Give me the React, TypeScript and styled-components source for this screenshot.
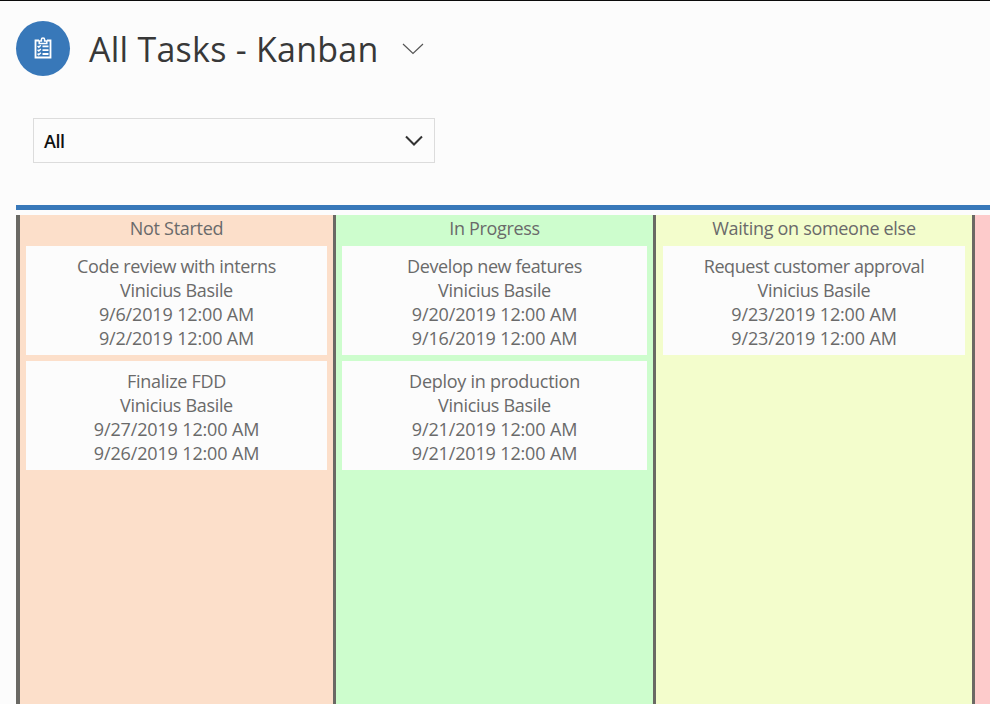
import React from 'react';
import styled, { createGlobalStyle } from 'styled-components';

const GlobalStyle = createGlobalStyle`
  * { box-sizing: border-box; }
  body { margin: 0; background: #fcfcfc; overflow: hidden; }
`;

const Page = styled.main`
  height: 704px;
  overflow: hidden;
  border-top: 1px solid #0b0b0b;
  background: #fcfcfc;
  color: #6a6a6a;
  font-family: 'Open Sans', 'Noto Sans', sans-serif;
`;

const Header = styled.header`
  display: flex;
  align-items: center;
  height: 94px;
  padding-left: 16px;
`;

const Badge = styled.div`
  display: grid;
  place-items: center;
  width: 54px;
  height: 55px;
  border-radius: 50%;
  background: #3878b9;
`;

const Title = styled.h1`
  margin: 1px 0 0 19px;
  width: 290px;
  color: #383838;
  font-size: 34px;
  font-weight: 400;
  line-height: 46px;
  letter-spacing: 0.25px;
  white-space: nowrap;
`;

const TitleChevron = styled.svg`
  margin: 1px 0 0 23px;
`;

const Select = styled.button`
  display: flex;
  align-items: center;
  justify-content: space-between;
  width: 402px;
  height: 45px;
  margin: 23px 0 0 33px;
  padding: 1px 11px 0 10px;
  border: 1px solid #dcdcdc;
  background: #fcfcfc;
  color: #111;
  font: 600 18px/24px 'Open Sans', sans-serif;
  letter-spacing: -0.5px;
`;

const SelectChevron = styled.svg`
  margin-top: -1px;
`;

const Board = styled.section`
  display: grid;
  grid-template-columns: 317px 320px 319px 320px;
  height: 510px;
  margin: 42px 0 0 16px;
  padding-top: 5px;
  border-top: 5px solid #3878b9;
`;

const Column = styled.section<{ $color: string; $edge: number; $inset: number }>`
  display: flex;
  flex-direction: column;
  gap: 6px;
  padding: 0 ${p => p.$inset}px 0 ${p => p.$inset}px;
  border-left: ${p => p.$edge}px solid #6a6964;
  background: ${p => p.$color};
`;

const ColumnTitle = styled.h2`
  margin: 0;
  height: 25.3px;
  font-size: 18px;
  font-weight: 400;
  line-height: 27px;
  text-align: center;
  white-space: nowrap;
`;

const Card = styled.article`
  height: 109.1px;
  padding-top: 7.3px;
  background: #fcfcfc;
  text-align: center;
`;

const Line = styled.div`
  font-size: 18px;
  line-height: 24px;
  white-space: nowrap;
`;

const Fit = styled.span<{ $track?: number }>`
  letter-spacing: ${p => p.$track ?? 0}px;
`;

type Text = [string, number];
interface ColumnData {
  title: Text;
  color: string;
  edge: number;
  inset: number;
  cards: Text[][];
}

const OWNER: Text = ['Vinicius Basile', -0.33];

const columns: ColumnData[] = [
  {
    title: ['Not Started', -0.3], color: '#fcdfca', edge: 4, inset: 6,
    cards: [
      [['Code review with interns', -0.36], OWNER, ['9/6/2019 12:00 AM', -0.15], ['9/2/2019 12:00 AM', -0.15]],
      [['Finalize FDD', -0.3], OWNER, ['9/27/2019 12:00 AM', -0.15], ['9/26/2019 12:00 AM', -0.15]],
    ],
  },
  {
    title: ['In Progress', -0.35], color: '#cdfdcd', edge: 3, inset: 6,
    cards: [
      [['Develop new features', -0.4], OWNER, ['9/20/2019 12:00 AM', -0.15], ['9/16/2019 12:00 AM', -0.15]],
      [['Deploy in production', -0.27], OWNER, ['9/21/2019 12:00 AM', -0.15], ['9/21/2019 12:00 AM', -0.15]],
    ],
  },
  {
    title: ['Waiting on someone else', -0.3], color: '#f3fdcc', edge: 3, inset: 7,
    cards: [
      [['Request customer approval', -0.42], OWNER, ['9/23/2019 12:00 AM', -0.15], ['9/23/2019 12:00 AM', -0.15]],
    ],
  },
  { title: ['', 0], color: '#fdcbcb', edge: 3, inset: 6, cards: [] },
];

const ClipboardIcon = () => (
  <svg width="18" height="22" viewBox="0 0 18 22" fill="none" stroke="#fff">
    <path d="M5 3.5H1.5v17h15v-17H13" strokeWidth="1.8" />
    <path d="M5.2 4h2.2V2.6a1.6 1.6 0 0 1 3.2 0V4h2.2v2.4H5.2z" strokeWidth="1.5" />
    <path d="M8.5 9.4H14.5M8.5 13.2H14.5M8.5 17H14.5" strokeWidth="1.8" />
    <path d="m3.6 9 1.2 1.2 2-2M3.6 12.8l1.2 1.2 2-2M3.6 16.6l1.2 1.2 2-2" strokeWidth="1.5" />
  </svg>
);

export default function App() {
  return (
    <>
      <GlobalStyle />
      <Page>
        <Header>
          <Badge><ClipboardIcon /></Badge>
          <Title>All Tasks - Kanban</Title>
          <TitleChevron width="22" height="12" viewBox="0 0 22 12" fill="none" stroke="#555" strokeWidth="1.2">
            <path d="m1 1 10 9.5L21 1" />
          </TitleChevron>
        </Header>
        <Select>
          All
          <SelectChevron width="18" height="12" viewBox="0 0 18 12" fill="none" stroke="#333" strokeWidth="2">
            <path d="m1 1.5 8 8 8-8" />
          </SelectChevron>
        </Select>
        <Board>
          {columns.map((column, i) => (
            <Column key={i} $color={column.color} $edge={column.edge} $inset={column.inset}>
              <ColumnTitle><Fit $track={column.title[1]}>{column.title[0]}</Fit></ColumnTitle>
              {column.cards.map((card, j) => (
                <Card key={j}>
                  {card.map(([text, track], k) => (
                    <Line key={k}><Fit $track={track}>{text}</Fit></Line>
                  ))}
                </Card>
              ))}
            </Column>
          ))}
        </Board>
      </Page>
    </>
  );
}
